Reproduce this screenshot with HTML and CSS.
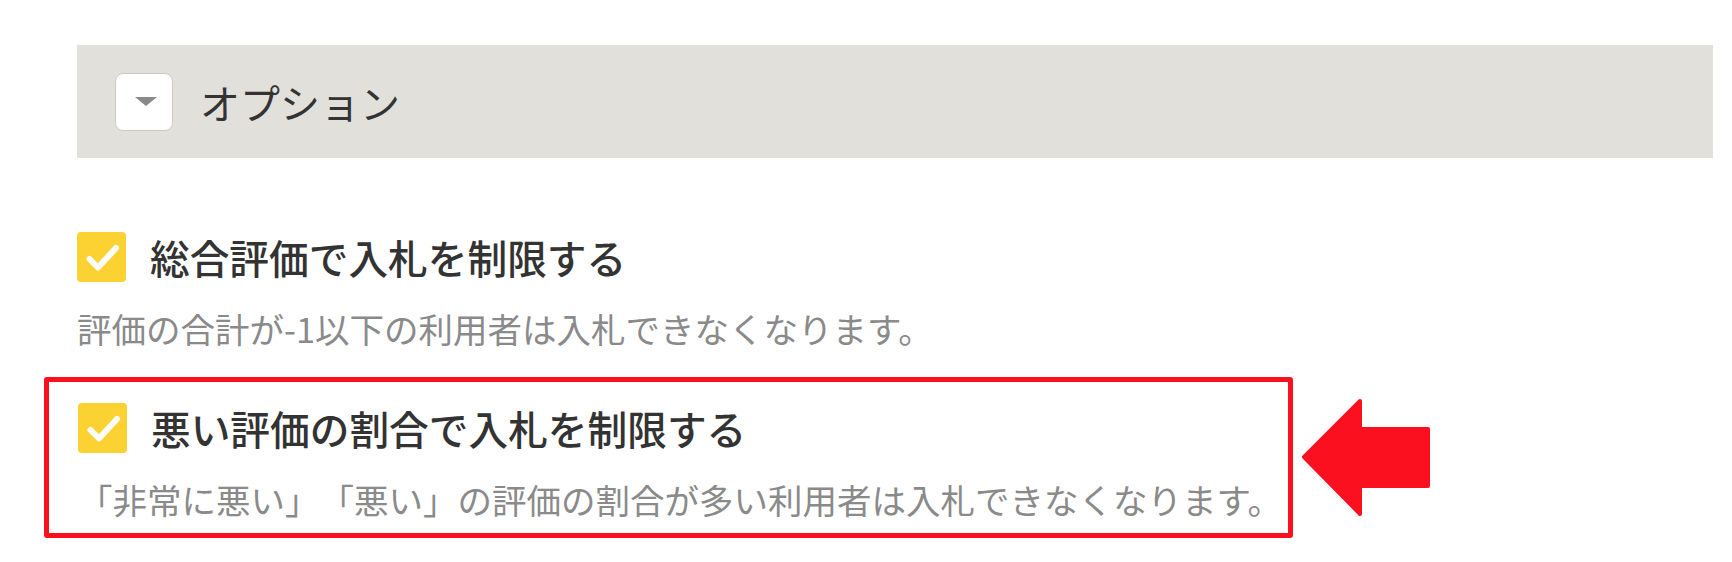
FILE: index.html
```html
<!DOCTYPE html>
<html lang="ja">
<head>
  <meta charset="UTF-8">
  <meta name="viewport" content="width=device-width, initial-scale=1.0">
  <title>オプション</title>
  <link rel="stylesheet" href="styles.css">
</head>
<body>
  <div class="page">
    <div class="section-bar">
      <button class="toggle" type="button" aria-label="開閉"><span class="toggle-arrow"></span></button>
      <h2 class="section-title">オプション</h2>
    </div>

    <div class="option">
      <label class="option-head">
        <span class="check">
          <svg viewBox="0 0 49 50" width="49" height="50"><polyline points="12.5,27 21,35.5 39,16" /></svg>
        </span>
        <span class="option-label">総合評価で入札を制限する</span>
      </label>
      <p class="option-desc">評価の合計が-1以下の利用者は入札できなくなります。</p>
    </div>

    <div class="option highlight">
      <label class="option-head">
        <span class="check">
          <svg viewBox="0 0 49 50" width="49" height="50"><polyline points="12.5,27 21,35.5 39,16" /></svg>
        </span>
        <span class="option-label">悪い評価の割合で入札を制限する</span>
      </label>
      <p class="option-desc">「非常に悪い」「悪い」の評価の割合が多い利用者は入札できなくなります。</p>

      <!-- pointer next to the highlighted option -->
      <svg class="pointer" viewBox="1296 393 140 130" width="140" height="130">
        <path d="M1304 457 L1360 401 L1360 429 L1428 429 L1428 486 L1360 486 L1360 514 Z" />
      </svg>
    </div>
  </div>
</body>
</html>
```

FILE: styles.css
```css
body {
  margin: 0;
  background-color: #fff;
  font-family: "Noto Sans CJK JP", "Noto Sans", sans-serif;
  color: #333;
  text-spacing-trim: space-all;
}
.page {
  padding: 45px 19px 0 77px;
}

/* grey section header */
.section-bar {
  display: flex;
  align-items: center;
  height: 113px;
  padding-left: 38px;
  background-color: #e2e0db;
}
.toggle {
  display: flex;
  align-items: center;
  justify-content: center;
  width: 58px;
  height: 58px;
  padding: 0;
  background-color: #fff;
  border: 1px solid #cbc9c4;
  border-radius: 8px;
}
.toggle-arrow {
  width: 0;
  height: 0;
  margin-left: 3px;
  border-left: 11px solid transparent;
  border-right: 11px solid transparent;
  border-top: 9px solid #8a8a8a;
}
.section-title {
  margin: 0 0 0 27px;
  font-size: 40px;
  font-weight: 400;
  line-height: 1;
  color: #333;
}

/* option rows */
.option {
  margin-top: 74px;
}
.option-head {
  display: flex;
  align-items: center;
  height: 50px;
}
.check {
  display: block;
  width: 49px;
  height: 50px;
  border-radius: 4px;
  background-color: #fcd232;
}
.check svg {
  display: block;
}
.check polyline {
  fill: none;
  stroke: #fff;
  stroke-width: 6;
  stroke-linecap: round;
  stroke-linejoin: round;
}
.option-label {
  margin-left: 24px;
  font-size: 39.7px;
  font-weight: 500;
  line-height: 50px;
  color: #333;
}
.option-desc {
  margin: 22px 0 0;
  font-size: 34.5px;
  line-height: 48px;
  color: #8a8a8a;
  white-space: nowrap;
}

/* red frame around the option being pointed at */
.highlight {
  position: relative;
  box-sizing: border-box;
  width: 1249px;
  margin: 25px 0 0 -33px;
  padding: 21px 0 10px 29px;
  border: 5px solid #fb1020;
  border-radius: 3px;
}
.pointer {
  position: absolute;
  left: calc(100% + 8px);
  top: 11px;
}
.pointer path {
  fill: #fb1020;
  stroke: #fb1020;
  stroke-width: 4;
  stroke-linejoin: round;
}
```
